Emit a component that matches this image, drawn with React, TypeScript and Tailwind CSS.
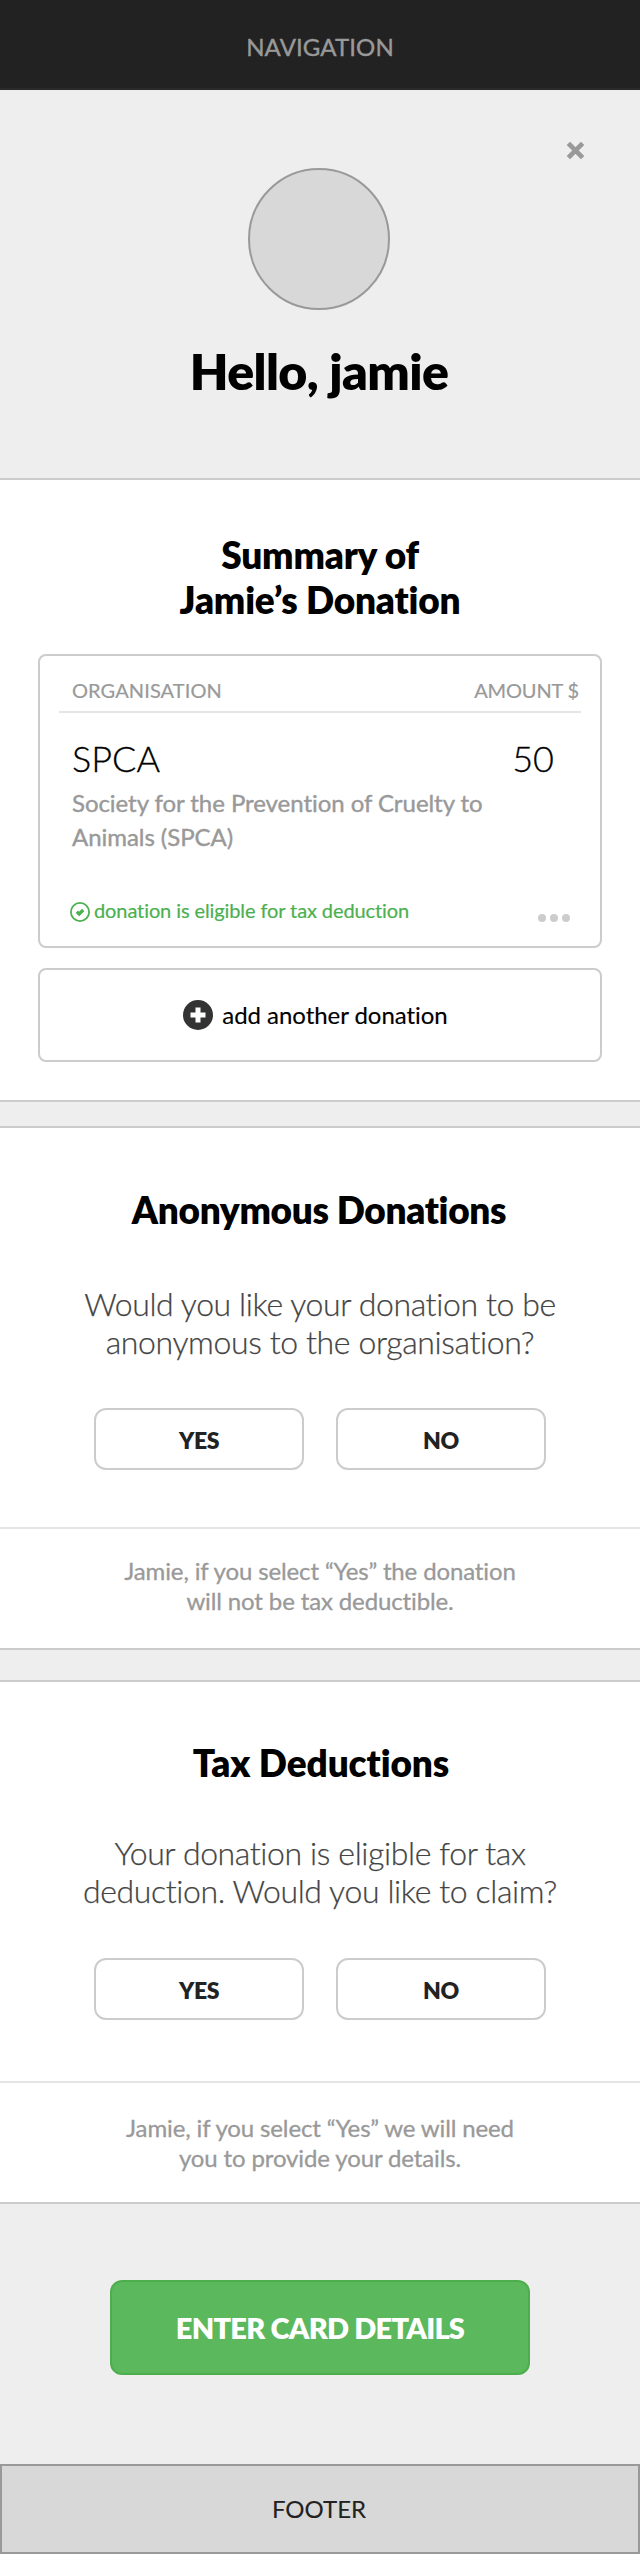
import React from "react";

function Choice({ label }: { label: string }) {
  return (
    <button className="w-[210px] h-[62px] rounded-xl border-2 border-[#ccc] bg-white pt-0.5 text-[23px] tracking-[-0.4px] font-extrabold text-[#222]">
      {label}
    </button>
  );
}

export default function App() {
  return (
    <div className="w-[640px] h-[2554px] flex flex-col bg-white font-[Lato,sans-serif] text-black whitespace-nowrap [font-variant-ligatures:none]">
      <nav className="h-[90px] shrink-0 bg-[#222] border-b-2 border-[#2b292b] flex items-center justify-center text-2xl tracking-[0.1px] text-[#999] pt-[5px] [-webkit-text-stroke:0.4px_#999]">
        NAVIGATION
      </nav>

      <header className="relative h-[390px] shrink-0 bg-[#eee] border-b-2 border-[#ccc] flex flex-col items-center pt-[78px]">
        <svg className="absolute left-[566px] top-[51px]" width="19" height="19" viewBox="0 0 20 20" stroke="#999" strokeWidth="5">
          <path d="M2.5 2.5 17.5 17.5M17.5 2.5 2.5 17.5" />
        </svg>
        <div className="size-[142px] mr-0.5 rounded-full bg-[#d8d8d8] border-2 border-[#999]" />
        <h1 className="mt-[31px] pr-0.5 text-[50px] leading-[60px] tracking-[-0.6px] font-extrabold">Hello, jamie</h1>
      </header>

      <section className="h-[622px] shrink-0 flex flex-col items-center border-b-2 border-[#ccc] pt-[52px]">
        <h2 className="text-[37px] leading-[45px] tracking-[-0.2px] font-extrabold text-center">
          Summary of
          <br />
          Jamie’s Donation
        </h2>
        <div className="mt-8 w-[564px] h-[294px] rounded-lg border-2 border-[#ccc] pt-[18px] px-[19px]">
          <div className="flex justify-between border-b-2 border-[#e5e5e5] h-[39px] pl-[13px] pr-[2px] text-xl leading-8 text-[#999] [-webkit-text-stroke:0.2px_#999]">
            <span className="tracking-[0.1px]">ORGANISATION</span>
            <span className="tracking-[-0.15px]">AMOUNT $</span>
          </div>
          <div className="flex justify-between pl-[13px] pr-[27px] mt-[22px] text-4xl leading-[46px] font-light [-webkit-text-stroke:0.3px_black]">
            <span>SPCA</span>
            <span>50</span>
          </div>
          <p className="mt-[5px] pl-[13px] text-2xl leading-[34px] tracking-[-0.05px] text-[#999] [-webkit-text-stroke:0.4px_#999]">
            Society for the Prevention of Cruelty to
            <br />
            Animals (SPCA)
          </p>
          <div className="flex items-center justify-between px-[11px] mt-[44px]">
            <div className="flex items-center gap-1 text-xl leading-6 tracking-[-0.1px] text-[#4cb050]">
              <svg className="mt-1" width="20" height="20" viewBox="0 0 20 20" fill="none" stroke="currentColor">
                <circle cx="10" cy="10" r="9.1" strokeWidth="1.8" />
                <path d="M6.8 9.8 9.2 12 13.2 8" strokeWidth="3.2" />
              </svg>
              <span className="[-webkit-text-stroke:0.2px_#4cb050]">donation is eligible for tax deduction</span>
            </div>
            <div className="flex gap-1 pt-4">
              <i className="size-2 rounded-full bg-[#ccc]" />
              <i className="size-2 rounded-full bg-[#ccc]" />
              <i className="size-2 rounded-full bg-[#ccc]" />
            </div>
          </div>
        </div>
        <button className="mt-5 w-[564px] h-[94px] rounded-lg border-2 border-[#ccc] pr-[9px] flex items-center justify-center gap-[9px] text-2xl tracking-[-0.05px] [-webkit-text-stroke:0.15px_black]">
          <svg width="30" height="30" viewBox="0 0 30 30">
            <circle cx="15" cy="15" r="15" fill="#333" />
            <path d="M15 7.5v15M7.5 15h15" stroke="white" strokeWidth="5" />
          </svg>
          <span>add another donation</span>
        </button>
      </section>

      <div className="h-[26px] shrink-0 bg-[#eee] border-b-2 border-[#ccc]" />

      <section className="h-[401px] shrink-0 flex flex-col items-center border-b-2 border-[#e5e5e5] pt-[59px]">
        <h2 className="pr-0.5 text-[37px] leading-[46px] tracking-[-0.35px] font-extrabold">Anonymous Donations</h2>
        <p className="mt-[52px] text-[32px] leading-[38px] tracking-[-0.38px] font-light text-[#444] text-center [-webkit-text-stroke:0.25px_#444]">
          Would you like your donation to be
          <br />
          anonymous to the organisation?
        </p>
        <div className="flex gap-8 mt-[47px]">
          <Choice label="YES" />
          <Choice label="NO" />
        </div>
      </section>
      <p className="h-[121px] shrink-0 border-b-2 border-[#ccc] pt-[27px] text-2xl leading-[30px] tracking-[-0.13px] text-[#999] text-center [-webkit-text-stroke:0.3px_#999]">
        Jamie, if you select “Yes” the donation
        <br />
        will not be tax deductible.
      </p>

      <div className="h-[32px] shrink-0 bg-[#eee] border-b-2 border-[#ccc]" />

      <section className="h-[401px] shrink-0 flex flex-col items-center border-b-2 border-[#e5e5e5] pt-[58px]">
        <h2 className="pl-0.5 text-[37px] leading-[46px] tracking-[-0.1px] font-extrabold">Tax Deductions</h2>
        <p className="mt-12 text-[32px] leading-[38px] tracking-[-0.38px] font-light text-[#444] text-center [-webkit-text-stroke:0.25px_#444]">
          Your donation is eligible for tax
          <br />
          deduction. Would you like to claim?
        </p>
        <div className="flex gap-8 mt-12">
          <Choice label="YES" />
          <Choice label="NO" />
        </div>
      </section>
      <p className="h-[121px] shrink-0 border-b-2 border-[#ccc] pt-[30px] text-2xl leading-[30px] tracking-[-0.13px] text-[#999] text-center [-webkit-text-stroke:0.3px_#999]">
        Jamie, if you select “Yes” we will need
        <br />
        you to provide your details.
      </p>

      <div className="flex-1 bg-[#eee] flex justify-center items-start pt-[76px]">
        <button className="w-[420px] h-[95px] rounded-xl border-2 border-[#4cae4c] bg-[#5cb85c] text-[29px] tracking-[-0.75px] font-extrabold text-white">
          ENTER CARD DETAILS
        </button>
      </div>
      <footer className="h-[90px] shrink-0 bg-[#d8d8d8] border-2 border-[#999] pr-0.5 flex items-center justify-center text-2xl text-[#222] [-webkit-text-stroke:0.1px_#222]">
        FOOTER
      </footer>
    </div>
  );
}
